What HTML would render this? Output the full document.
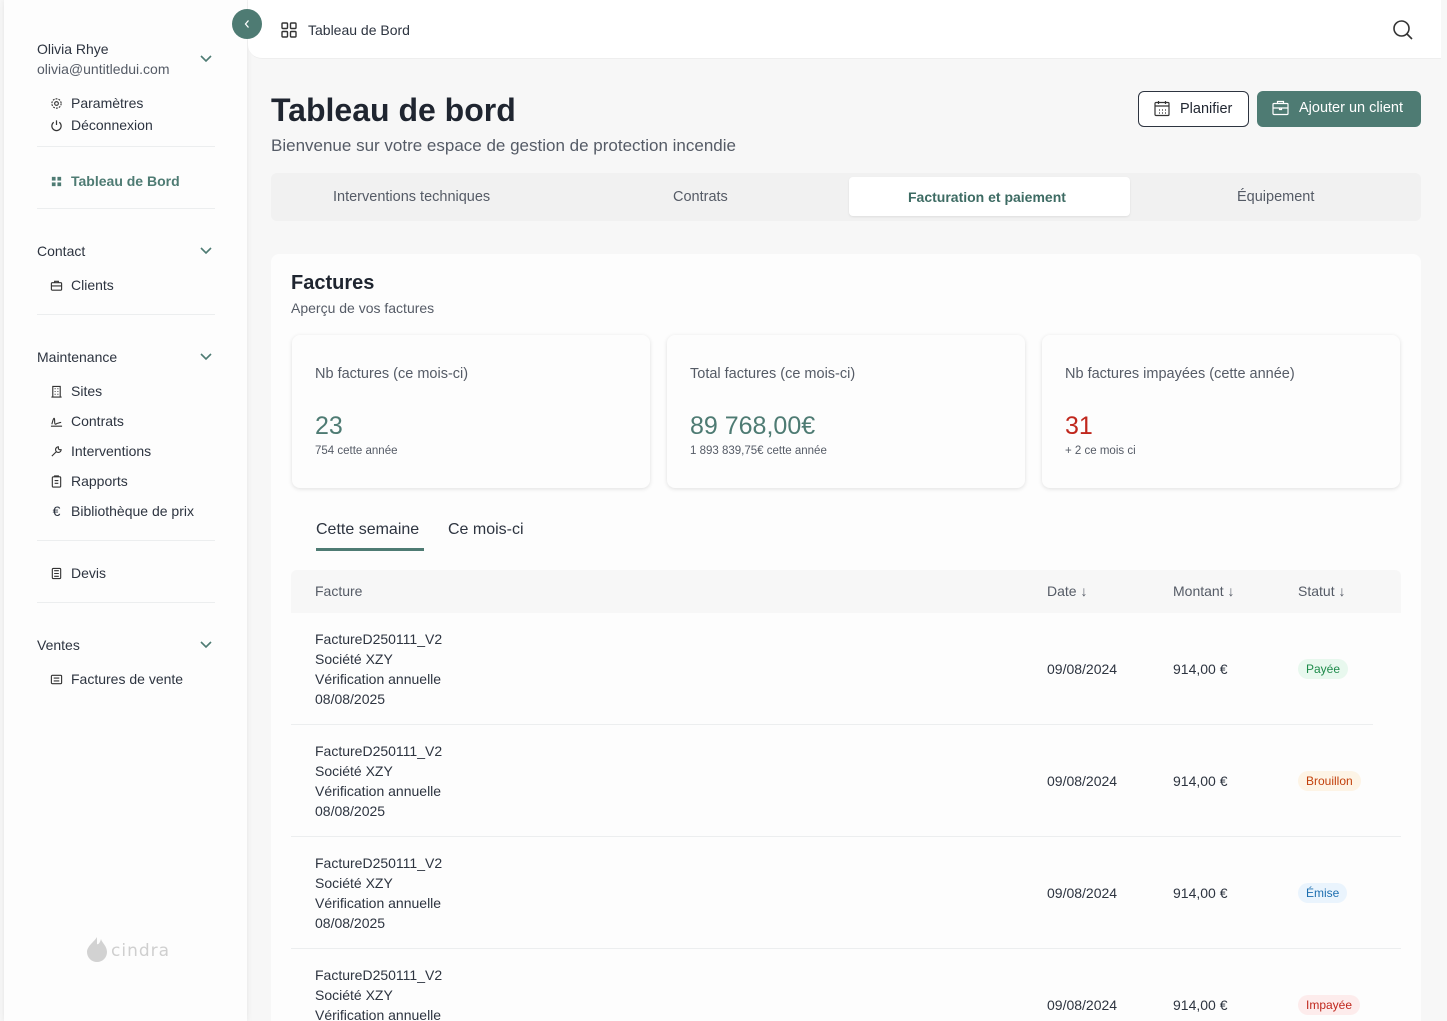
<!DOCTYPE html>
<html style="overflow:hidden;width:1447px;height:1021px"><head><meta charset="utf-8"><style>
*{box-sizing:border-box;margin:0;padding:0}
body{width:1447px;height:1021px;overflow:hidden;background:#f7f7f7;font-family:"Liberation Sans",sans-serif;color:#1f2937;position:relative}
.side{position:absolute;left:4px;top:0;width:243px;height:1021px;background:#fdfdfd;box-shadow:0 0 6px rgba(0,0,0,.08)}
.abs{position:absolute}
.t14{font-size:14px}
.item{position:absolute;left:46px;font-size:14px;color:#2d3440;display:flex;align-items:center;gap:8px}
.item svg{width:13px;height:13px}
.hr{position:absolute;left:33px;width:178px;height:1px;background:#eceeef}
.chev{position:absolute;left:196px;width:12px;height:8px}
.top{position:absolute;left:248px;top:0;width:1193px;height:59px;background:#fff;border-bottom:1px solid #eee;border-radius:0 0 0 14px}
.card{position:absolute;background:#fdfdfd;border-radius:8px 8px 0 0}
.stat{position:absolute;top:335px;width:358px;height:153px;background:#fdfdfd;border-radius:8px;box-shadow:0 1px 4px rgba(0,0,0,.12)}
.stat .l{position:absolute;left:23px;top:31px;font-size:14.5px;color:#555b66}
.stat .v{position:absolute;left:23px;top:77px;font-size:25px;color:#4e7b73}
.stat .s{position:absolute;left:23px;top:110px;font-size:11.5px;color:#555b66}
.row{position:absolute;left:315px;font-size:14px;line-height:20px;color:#2d3440}
.c{position:absolute;font-size:14px;color:#2d3440}
.badge{position:absolute;font-size:12px;padding:3px 8px;border-radius:11px}
.sep{position:absolute;left:291px;height:1px;background:#eceeef}
</style></head><body>
<div class="side">
 <div class="abs t14" style="left:33px;top:41px;color:#2d3440">Olivia Rhye</div>
 <div class="abs t14" style="left:33px;top:61px;color:#555b66">olivia@untitledui.com</div>
 <svg class="chev" style="top:55px" viewBox="0 0 12 8"><path d="M1 1l5 5 5-5" fill="none" stroke="#4e7b73" stroke-width="1.6"/></svg>
 <div class="item" style="top:95px"><svg viewBox="0 0 14 14"><circle cx="7" cy="7" r="2" fill="none" stroke="#333" stroke-width="1.2"/><circle cx="7" cy="7" r="5" fill="none" stroke="#333" stroke-width="1.2" stroke-dasharray="2 1.2"/></svg>Paramètres</div>
 <div class="item" style="top:117px"><svg viewBox="0 0 14 14"><path d="M4 3.5a5 5 0 1 0 6 0M7 1.5v5" fill="none" stroke="#333" stroke-width="1.3"/></svg>Déconnexion</div>
 <div class="hr" style="top:146px"></div>
 <div class="item" style="top:173px;color:#4e7b73;font-weight:bold"><svg viewBox="0 0 14 14" fill="#4e7b73"><rect x="2" y="2" width="4" height="4"/><rect x="8" y="2" width="4" height="4"/><rect x="2" y="8" width="4" height="4"/><rect x="8" y="8" width="4" height="4"/></svg>Tableau de Bord</div>
 <div class="hr" style="top:208px"></div>
 <div class="abs t14" style="left:33px;top:243px;color:#2d3440">Contact</div>
 <svg class="chev" style="top:247px" viewBox="0 0 12 8"><path d="M1 1l5 5 5-5" fill="none" stroke="#4e7b73" stroke-width="1.6"/></svg>
 <div class="item" style="top:277px"><svg viewBox="0 0 14 14"><rect x="1.5" y="4" width="11" height="8" rx="1" fill="none" stroke="#333" stroke-width="1.2"/><path d="M5 4V2.5h4V4M1.5 7.5h11" fill="none" stroke="#333" stroke-width="1.2"/></svg>Clients</div>
 <div class="hr" style="top:314px"></div>
 <div class="abs t14" style="left:33px;top:349px;color:#2d3440">Maintenance</div>
 <svg class="chev" style="top:353px" viewBox="0 0 12 8"><path d="M1 1l5 5 5-5" fill="none" stroke="#4e7b73" stroke-width="1.6"/></svg>
 <div class="item" style="top:383px"><svg viewBox="0 0 14 14"><path d="M3 13V1.5h8V13M1.5 13h11M5 4h1M8 4h1M5 7h1M8 7h1M5 10h1M8 10h1" fill="none" stroke="#333" stroke-width="1.2"/></svg>Sites</div>
 <div class="item" style="top:413px"><svg viewBox="0 0 14 14"><path d="M1 12h12M2 10c2-8 3-8 3-3s2 2 3 2 2-1 4-1" fill="none" stroke="#333" stroke-width="1.2"/></svg>Contrats</div>
 <div class="item" style="top:443px"><svg viewBox="0 0 14 14"><path d="M2 12l5-5M9 2a3 3 0 1 0 3 3l-2 0-1-1z" fill="none" stroke="#333" stroke-width="1.2"/></svg>Interventions</div>
 <div class="item" style="top:473px"><svg viewBox="0 0 14 14"><rect x="2.5" y="2" width="9" height="11" rx="1" fill="none" stroke="#333" stroke-width="1.2"/><path d="M5 2V1h4v1M5 6h4M5 9h4" fill="none" stroke="#333" stroke-width="1.2"/></svg>Rapports</div>
 <div class="item" style="top:503px"><span style="width:13px;text-align:center">€</span>Bibliothèque de prix</div>
 <div class="hr" style="top:540px"></div>
 <div class="item" style="top:565px"><svg viewBox="0 0 14 14"><rect x="2.5" y="1.5" width="9" height="11" rx="1" fill="none" stroke="#333" stroke-width="1.2"/><path d="M4.5 4h5M4.5 7h5M4.5 10h5" stroke="#333" stroke-width="1.2"/></svg>Devis</div>
 <div class="hr" style="top:602px"></div>
 <div class="abs t14" style="left:33px;top:637px;color:#2d3440">Ventes</div>
 <svg class="chev" style="top:641px" viewBox="0 0 12 8"><path d="M1 1l5 5 5-5" fill="none" stroke="#4e7b73" stroke-width="1.6"/></svg>
 <div class="item" style="top:671px"><svg viewBox="0 0 14 14"><rect x="1.5" y="2.5" width="11" height="9" rx="1" fill="none" stroke="#333" stroke-width="1.2"/><path d="M4 5.5h6M4 8.5h6" stroke="#333" stroke-width="1.2"/></svg>Factures de vente</div>
 <svg class="abs" style="left:81px;top:935px" width="24" height="28" viewBox="0 0 24 28"><path d="M12 2c-2 4-10 9-10 15a10 10 0 0 0 20 0c0-6-5-9-6-13-1 4-3 6-4 5z" fill="#d2d2d2"/></svg>
 <div class="abs" style="left:107px;top:941px;font-size:17px;color:#cfcfcf;letter-spacing:1px;font-family:'DejaVu Sans',sans-serif">cindra</div>
</div>
<div class="top">
 <svg class="abs" style="left:33px;top:22px" width="16" height="16" viewBox="0 0 16 16" fill="none" stroke="#333" stroke-width="1.4"><rect x="1" y="1" width="5.5" height="5.5" rx="1"/><rect x="9.5" y="1" width="5.5" height="5.5" rx="1"/><rect x="1" y="9.5" width="5.5" height="5.5" rx="1"/><rect x="9.5" y="9.5" width="5.5" height="5.5" rx="1"/></svg>
 <div class="abs t14" style="left:60px;top:22px;color:#2d3440">Tableau de Bord</div>
 <svg class="abs" style="left:1144px;top:19px" width="22" height="22" viewBox="0 0 22 22" fill="none" stroke="#333" stroke-width="1.6"><circle cx="9.5" cy="9.5" r="7.5"/><path d="M15 15l5 5"/></svg>
</div>
<div class="abs" style="left:232px;top:9px;width:30px;height:30px;border-radius:50%;background:#4e7b73"><svg width="30" height="30" viewBox="0 0 30 30"><path d="M16.5 11.5l-3 3.5 3 3.5" fill="none" stroke="#fff" stroke-width="1.3"/></svg></div>
<div class="abs" style="left:271px;top:92px;font-size:32px;font-weight:bold;color:#1f2530">Tableau de bord</div>
<div class="abs" style="left:271px;top:136px;font-size:17px;color:#555b66">Bienvenue sur votre espace de gestion de protection incendie</div>
<div class="abs" style="left:1138px;top:91px;width:111px;height:36px;border:1px solid #2d3440;border-radius:6px;background:#fff;font-size:14.5px;color:#1f2530;padding:9px 0 0 41px">Planifier</div>
<svg class="abs" style="left:1154px;top:100px" width="16" height="17" viewBox="0 0 16 17" fill="none" stroke="#333" stroke-width="1.2"><rect x="1" y="2.5" width="14" height="13" rx="1"/><path d="M1 6h14M4.5 1v3M11.5 1v3M5 10h1M8 10h1M11 10h1M5 13h1M8 13h1M11 13h1"/></svg>
<div class="abs" style="left:1257px;top:91px;width:164px;height:36px;border-radius:6px;background:#4e7b73;font-size:14.5px;color:#fff;padding:9px 0 0 42px">Ajouter un client</div>
<svg class="abs" style="left:1272px;top:100px" width="17" height="16" viewBox="0 0 17 16" fill="none" stroke="#fff" stroke-width="1.2"><rect x="1" y="3.5" width="15" height="11" rx="1"/><path d="M5.5 3.5V1.5h6v2M1 8h15M7.5 8v1.5h2V8"/></svg>
<div class="abs" style="left:271px;top:173px;width:1150px;height:48px;background:#f1f1f1;border-radius:6px"></div>
<div class="abs" style="left:333px;top:189px;color:#555b66;font-size:14.5px">Interventions techniques</div>
<div class="abs" style="left:673px;top:189px;color:#555b66;font-size:14.5px">Contrats</div>
<div class="abs" style="left:849px;top:177px;width:281px;height:39px;background:#fff;border-radius:4px;box-shadow:0 1px 2px rgba(0,0,0,.08)"></div>
<div class="abs t14" style="left:908px;top:189px;color:#3d6b63;font-weight:bold">Facturation et paiement</div>
<div class="abs" style="left:1237px;top:189px;color:#555b66;font-size:14.5px">Équipement</div>
<div class="card" style="left:271px;top:254px;width:1150px;height:767px"></div>
<div class="abs" style="left:291px;top:272px;font-size:20px;font-weight:bold;color:#1f2530">Factures</div>
<div class="abs t14" style="left:291px;top:300px;color:#555b66">Aperçu de vos factures</div>
<div class="stat" style="left:292px"><div class="l">Nb factures (ce mois-ci)</div><div class="v">23</div><div class="s">754 cette année</div></div>
<div class="stat" style="left:667px"><div class="l">Total factures (ce mois-ci)</div><div class="v">89 768,00€</div><div class="s">1 893 839,75€ cette année</div></div>
<div class="stat" style="left:1042px"><div class="l">Nb factures impayées (cette année)</div><div class="v" style="color:#c0271d">31</div><div class="s">+ 2 ce mois ci</div></div>
<div class="abs" style="left:316px;top:521px;font-size:16px;color:#2d3440">Cette semaine</div>
<div class="abs" style="left:316px;top:548px;width:108px;height:3px;background:#4e7b73"></div>
<div class="abs" style="left:448px;top:521px;font-size:16px;color:#2d3440">Ce mois-ci</div>
<div class="abs" style="left:291px;top:570px;width:1110px;height:43px;background:#f7f7f7;border-radius:6px 6px 0 0"></div>
<div class="c" style="left:315px;top:583px;color:#555b66">Facture</div>
<div class="c" style="left:1047px;top:583px;color:#555b66">Date ↓</div>
<div class="c" style="left:1173px;top:583px;color:#555b66">Montant ↓</div>
<div class="c" style="left:1298px;top:583px;color:#555b66">Statut ↓</div>

<div class="row" style="top:629px">FactureD250111_V2<br>Société XZY<br>Vérification annuelle<br>08/08/2025</div>
<div class="c" style="left:1047px;top:661px">09/08/2024</div><div class="c" style="left:1173px;top:661px">914,00 €</div>
<div class="badge" style="left:1298px;top:659px;background:#e8f8ee;color:#1d8a4a">Payée</div>
<div class="sep" style="top:724px;width:1082px"></div>

<div class="row" style="top:741px">FactureD250111_V2<br>Société XZY<br>Vérification annuelle<br>08/08/2025</div>
<div class="c" style="left:1047px;top:773px">09/08/2024</div><div class="c" style="left:1173px;top:773px">914,00 €</div>
<div class="badge" style="left:1298px;top:771px;background:#fdf4e6;color:#c2410c">Brouillon</div>
<div class="sep" style="top:836px;width:1110px"></div>

<div class="row" style="top:853px">FactureD250111_V2<br>Société XZY<br>Vérification annuelle<br>08/08/2025</div>
<div class="c" style="left:1047px;top:885px">09/08/2024</div><div class="c" style="left:1173px;top:885px">914,00 €</div>
<div class="badge" style="left:1298px;top:883px;background:#eaf4fd;color:#1e6fb0">Émise</div>
<div class="sep" style="top:948px;width:1110px"></div>

<div class="row" style="top:965px">FactureD250111_V2<br>Société XZY<br>Vérification annuelle</div>
<div class="c" style="left:1047px;top:997px">09/08/2024</div><div class="c" style="left:1173px;top:997px">914,00 €</div>
<div class="badge" style="left:1298px;top:995px;background:#fdecec;color:#c0271d">Impayée</div>
</body></html>
